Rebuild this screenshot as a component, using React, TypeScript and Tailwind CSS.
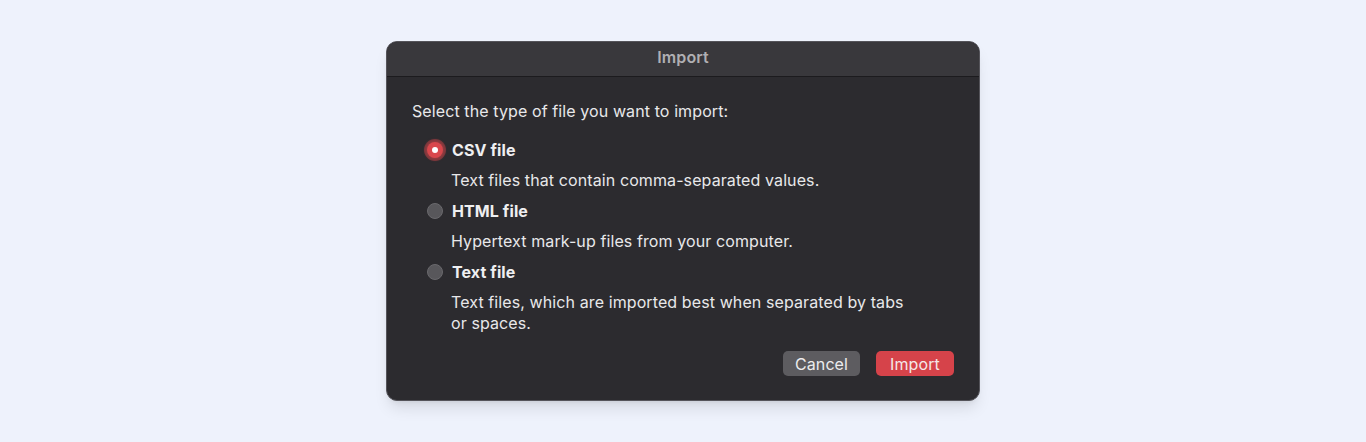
import React, { useState } from 'react';

type Option = {
  id: string;
  label: string;
  description: string;
};

const options: Option[] = [
  { id: 'csv', label: 'CSV file', description: 'Text files that contain comma-separated values.' },
  { id: 'html', label: 'HTML file', description: 'Hypertext mark-up files from your computer.' },
  {
    id: 'text',
    label: 'Text file',
    description: 'Text files, which are imported best when separated by tabs or spaces.',
  },
];

const Radio: React.FC<{ checked: boolean }> = ({ checked }) =>
  checked ? (
    <span className="w-4 h-4 rounded-full bg-[#d9474c] flex items-center justify-center ring-[3px] ring-[#d9474c]/40 shadow-[0_0_3px_2px_rgba(217,71,76,0.35)]">
      <span className="w-[6px] h-[6px] rounded-full bg-white" />
    </span>
  ) : (
    <span className="w-4 h-4 rounded-full bg-[#58575b] border border-[#6a696d]" />
  );

const ImportDialog: React.FC = () => {
  const [selected, setSelected] = useState('csv');

  return (
    <div className="w-[594px] rounded-[11px] border border-[#55545a] bg-[#2c2b2f] shadow-lg overflow-hidden tracking-[0.1px]">
      {/* Title bar */}
      <div className="h-[35px] pb-[4px] bg-[#39383c] border-b border-[#1c1b1e] flex items-center justify-center">
        <span className="text-[16px] font-semibold text-[#b0afb3]">Import</span>
      </div>

      <div className="pl-[25px] pr-[25px] pt-[24px] pb-[24px]">
        <p className="text-[16px] leading-[20px] text-[#e8e8ea]">Select the type of file you want to import:</p>

        <div className="mt-[18px] pl-[15px] flex flex-col gap-[9px]">
          {options.map((opt) => (
            <div key={opt.id} className="cursor-pointer" onClick={() => setSelected(opt.id)}>
              <div className="h-[22px] flex items-center gap-[9px]">
                <Radio checked={selected === opt.id} />
                <span className="text-[16px] font-bold text-[#efeff1]">{opt.label}</span>
              </div>
              <p className="mt-[9px] pl-[24px] w-[480px] text-[16px] leading-[21px] text-[#e8e8ea]">
                {opt.description}
              </p>
            </div>
          ))}
        </div>

        <div className="mt-[17px] flex justify-end gap-4">
          <button className="w-[77px] h-[25px] rounded-[5px] bg-[#5d5c60] text-[16px] text-[#ececee]">Cancel</button>
          <button className="w-[78px] h-[25px] rounded-[5px] bg-[#d6434a] text-[16px] text-[#f4e8e8]">Import</button>
        </div>
      </div>
    </div>
  );
};

export default function App() {
  return (
    <div
      className="w-full h-[442px] bg-[#eef2fc] flex items-center justify-center"
      style={{ fontFamily: 'Inter, "Noto Sans", sans-serif' }}
    >
      <ImportDialog />
    </div>
  );
}
